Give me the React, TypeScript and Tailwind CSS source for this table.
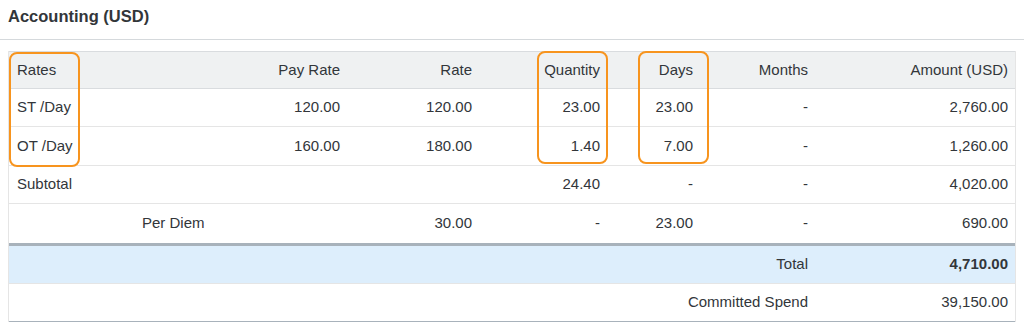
import React from "react";

const cols = "grid grid-cols-[204px_135px_132px_128px_93px_115px_200px]";

function Row({ cells, className = "h-[38px]", first }: { cells: React.ReactNode[]; className?: string; first?: React.ReactNode }) {
  return (
    <div className={`${cols} items-center border-b border-[#e5e5e5] ${className}`}>
      <div className="pl-2">{first}</div>
      {cells.map((c, i) => (
        <div key={i} className="pr-2 text-right">{c}</div>
      ))}
    </div>
  );
}

export default function App() {
  return (
    <div className="w-[1024px] h-[323px] bg-white text-[#32363a] text-[15px] overflow-hidden" style={{ fontFamily: '"Liberation Sans", Arial, sans-serif' }}>
      <div className="h-[40px] pl-2 pt-[5px] text-[16.5px] font-bold leading-[22px] border-b border-[#d5d9dc]">
        Accounting (USD)
      </div>
      <div className="h-[11px]" />
      <div className="relative mx-2 border-l border-r border-[#e5e5e5]">
        <div className={`${cols} h-[38px] items-center bg-[#eff1f2] border-t border-b border-[#d9dcdf]`}>
          <div className="pl-2">Rates</div>
          <div className="pr-2 text-right">Pay Rate</div>
          <div className="pr-2 text-right">Rate</div>
          <div className="pr-2 text-right">Quantity</div>
          <div className="pr-2 text-right">Days</div>
          <div className="pr-2 text-right">Months</div>
          <div className="pr-2 text-right">Amount (USD)</div>
        </div>
        <Row first="ST /Day" cells={["120.00", "120.00", "23.00", "23.00", "-", "2,760.00"]} />
        <Row className="h-[39px]" first="OT /Day" cells={["160.00", "180.00", "1.40", "7.00", "-", "1,260.00"]} />
        <Row first="Subtotal" cells={["", "", "24.40", "-", "-", "4,020.00"]} />
        <div className={`${cols} h-[42px] items-center border-b-[3px] border-[#a8b2bb]`}>
          <div className="pl-[133px]">Per Diem</div>
          <div className="pr-2 text-right"></div>
          <div className="pr-2 text-right">30.00</div>
          <div className="pr-2 text-right">-</div>
          <div className="pr-2 text-right">23.00</div>
          <div className="pr-2 text-right">-</div>
          <div className="pr-2 text-right">690.00</div>
        </div>
        <div className={`${cols} h-[38px] items-center bg-[#ddeefc] border-b border-[#e5e5e5]`}>
          <div />
          <div />
          <div />
          <div />
          <div />
          <div className="pr-2 text-right">Total</div>
          <div className="pr-2 text-right font-bold">4,710.00</div>
        </div>
        <div className={`${cols} h-[38px] items-center border-b border-[#a8b2bb]`}>
          <div />
          <div />
          <div />
          <div />
          <div className="col-span-2 pr-2 text-right">Committed Spend</div>
          <div className="pr-2 text-right">39,150.00</div>
        </div>

        <div className="absolute left-[0px] top-[1px] w-[71px] h-[115px] rounded-[8px] border-2 border-[#f7941e]" />
        <div className="absolute left-[528px] top-[0px] w-[71px] h-[113px] rounded-[8px] border-2 border-[#f7941e]" />
        <div className="absolute left-[629px] top-[0px] w-[71px] h-[113px] rounded-[8px] border-2 border-[#f7941e]" />
      </div>
    </div>
  );
}
